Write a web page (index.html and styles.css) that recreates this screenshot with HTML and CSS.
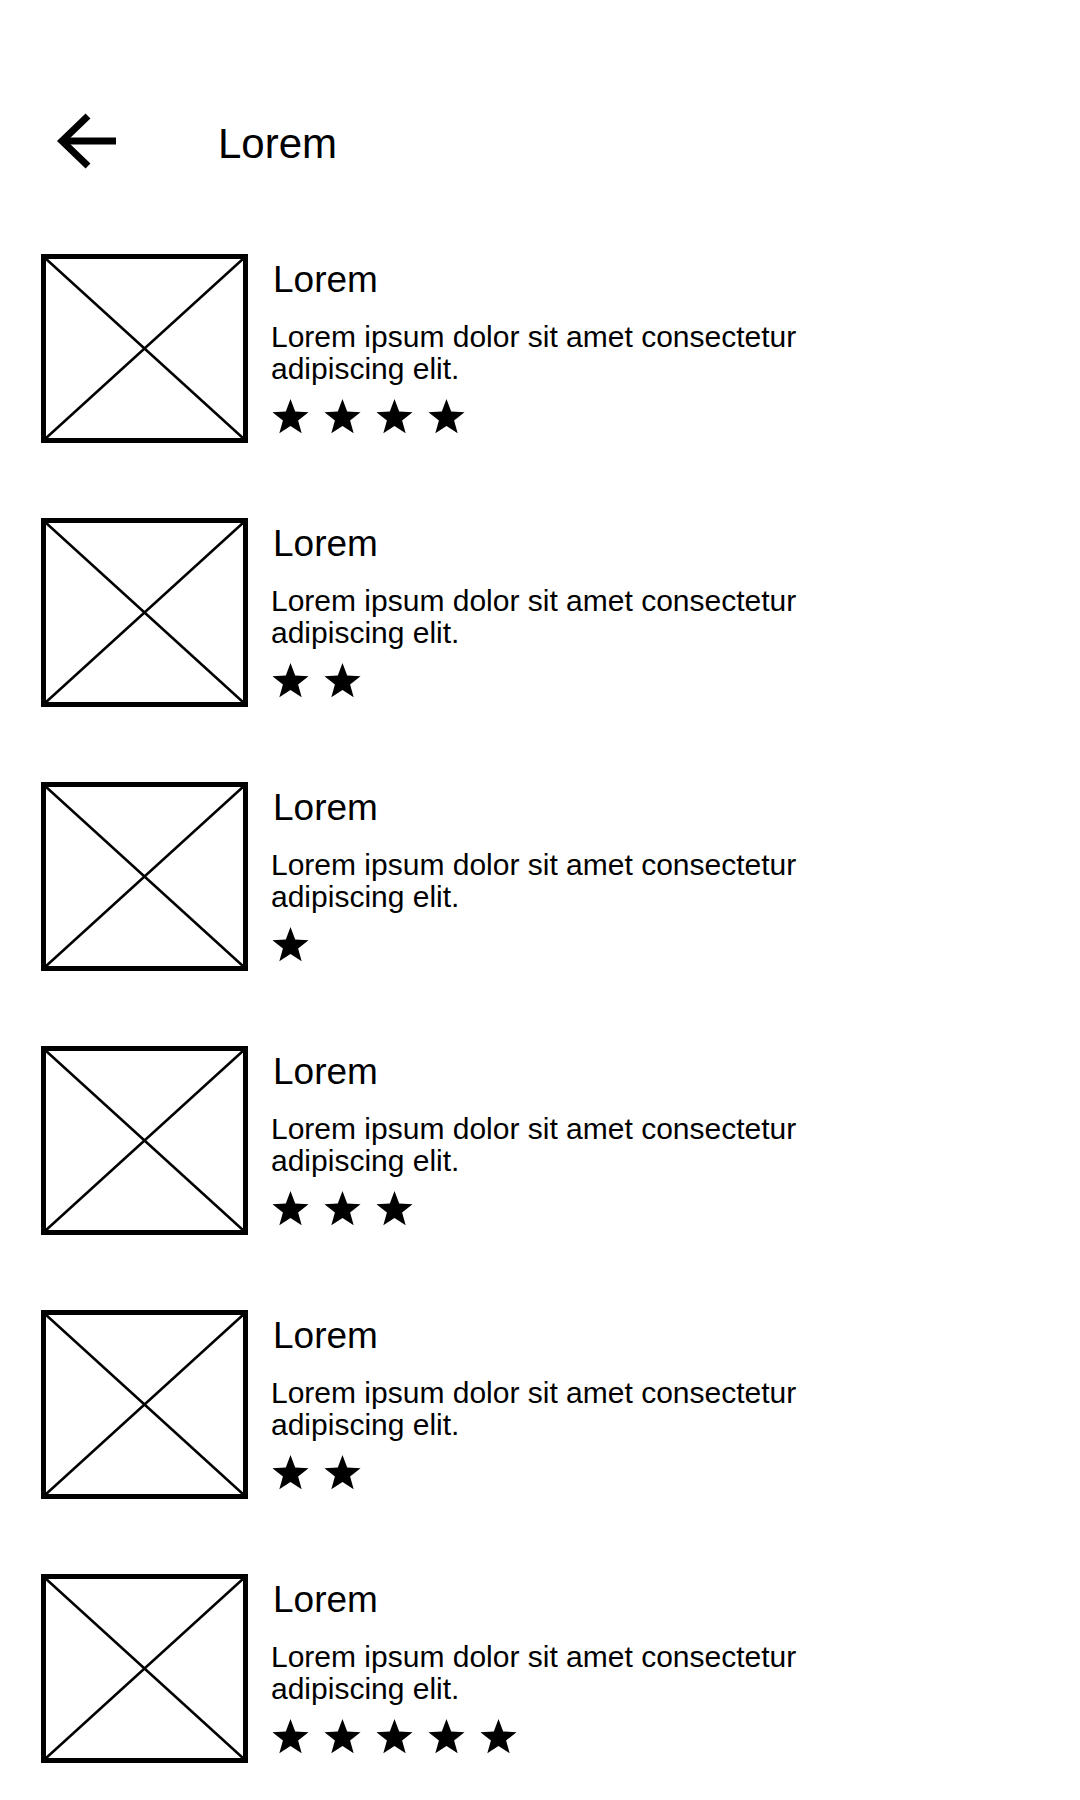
FILE: index.html
```html
<!DOCTYPE html>
<html lang="en">
<head>
<meta charset="utf-8">
<title>Lorem</title>
<link rel="stylesheet" href="styles.css">
</head>
<body>
<svg class="defs" width="0" height="0" aria-hidden="true">
  <defs>
    <symbol id="star" viewBox="0 0 37 35">
      <polygon points="18.5,0 23.19,12.54 36.57,13.13 26.09,21.47 29.67,34.37 18.5,26.98 7.33,34.37 10.91,21.47 0.43,13.13 13.81,12.54" fill="#000"/>
    </symbol>
    <symbol id="thumb" viewBox="0 0 207 189">
      <rect x="2.5" y="2.5" width="202" height="184" fill="#fff" stroke="#000" stroke-width="5"/>
      <line x1="4" y1="4" x2="203" y2="185" stroke="#000" stroke-width="2.5"/>
      <line x1="203" y1="4" x2="4" y2="185" stroke="#000" stroke-width="2.5"/>
    </symbol>
  </defs>
</svg>
<div class="page">
  <header class="header">
    <svg class="back" width="65" height="60" viewBox="0 0 65 60">
      <path d="M34 4 L8 29 L34 54" fill="none" stroke="#000" stroke-width="7" stroke-linejoin="miter"/>
      <path d="M8 29 L62 29" fill="none" stroke="#000" stroke-width="7"/>
    </svg>
    <h1 class="header-title">Lorem</h1>
  </header>

  <ul class="list">
    <li class="item">
      <svg class="thumb" width="207" height="189"><use href="#thumb"/></svg>
      <div class="info">
        <h2 class="title">Lorem</h2>
        <p class="desc">Lorem ipsum dolor sit amet consectetur adipiscing elit.</p>
        <div class="stars">
          <svg class="star"><use href="#star"/></svg>
          <svg class="star"><use href="#star"/></svg>
          <svg class="star"><use href="#star"/></svg>
          <svg class="star"><use href="#star"/></svg>
        </div>
      </div>
    </li>
    <li class="item">
      <svg class="thumb" width="207" height="189"><use href="#thumb"/></svg>
      <div class="info">
        <h2 class="title">Lorem</h2>
        <p class="desc">Lorem ipsum dolor sit amet consectetur adipiscing elit.</p>
        <div class="stars">
          <svg class="star"><use href="#star"/></svg>
          <svg class="star"><use href="#star"/></svg>
        </div>
      </div>
    </li>
    <li class="item">
      <svg class="thumb" width="207" height="189"><use href="#thumb"/></svg>
      <div class="info">
        <h2 class="title">Lorem</h2>
        <p class="desc">Lorem ipsum dolor sit amet consectetur adipiscing elit.</p>
        <div class="stars">
          <svg class="star"><use href="#star"/></svg>
        </div>
      </div>
    </li>
    <li class="item">
      <svg class="thumb" width="207" height="189"><use href="#thumb"/></svg>
      <div class="info">
        <h2 class="title">Lorem</h2>
        <p class="desc">Lorem ipsum dolor sit amet consectetur adipiscing elit.</p>
        <div class="stars">
          <svg class="star"><use href="#star"/></svg>
          <svg class="star"><use href="#star"/></svg>
          <svg class="star"><use href="#star"/></svg>
        </div>
      </div>
    </li>
    <li class="item">
      <svg class="thumb" width="207" height="189"><use href="#thumb"/></svg>
      <div class="info">
        <h2 class="title">Lorem</h2>
        <p class="desc">Lorem ipsum dolor sit amet consectetur adipiscing elit.</p>
        <div class="stars">
          <svg class="star"><use href="#star"/></svg>
          <svg class="star"><use href="#star"/></svg>
        </div>
      </div>
    </li>
    <li class="item">
      <svg class="thumb" width="207" height="189"><use href="#thumb"/></svg>
      <div class="info">
        <h2 class="title">Lorem</h2>
        <p class="desc">Lorem ipsum dolor sit amet consectetur adipiscing elit.</p>
        <div class="stars">
          <svg class="star"><use href="#star"/></svg>
          <svg class="star"><use href="#star"/></svg>
          <svg class="star"><use href="#star"/></svg>
          <svg class="star"><use href="#star"/></svg>
          <svg class="star"><use href="#star"/></svg>
        </div>
      </div>
    </li>
  </ul>
</div>
</body>
</html>
```

FILE: styles.css
```css
* {
  box-sizing: border-box;
}

html, body {
  margin: 0;
  padding: 0;
  background: #fff;
}

body {
  font-family: "Liberation Sans", Arial, Helvetica, sans-serif;
  color: #000;
  width: 1080px;
  min-height: 1800px;
}

.defs {
  position: absolute;
  width: 0;
  height: 0;
  overflow: hidden;
}

.page {
  display: flex;
  flex-direction: column;
}

.header {
  display: flex;
  align-items: flex-start;
  padding: 112px 0 0 54px;
}

.back {
  display: block;
  flex: none;
}

.header-title {
  margin: 8px 0 0 99px;
  font-size: 42px;
  font-weight: 400;
  line-height: 48px;
}

.list {
  list-style: none;
  margin: 82px 0 0;
  padding: 0 0 0 41px;
  display: flex;
  flex-direction: column;
  gap: 75px;
}

.item {
  display: flex;
  align-items: flex-start;
  gap: 23px;
}

.thumb {
  display: block;
  flex: none;
}

.info {
  display: flex;
  flex-direction: column;
  align-items: flex-start;
}

.title {
  margin: 4px 0 0 2px;
  font-size: 37px;
  font-weight: 400;
  line-height: 43px;
}

.desc {
  margin: 20px 0 0;
  width: 545px;
  font-size: 30px;
  line-height: 32px;
}

.stars {
  display: flex;
  gap: 15px;
  margin-top: 14px;
  padding-left: 1px;
}

.star {
  display: block;
  width: 37px;
  height: 35px;
}
```
